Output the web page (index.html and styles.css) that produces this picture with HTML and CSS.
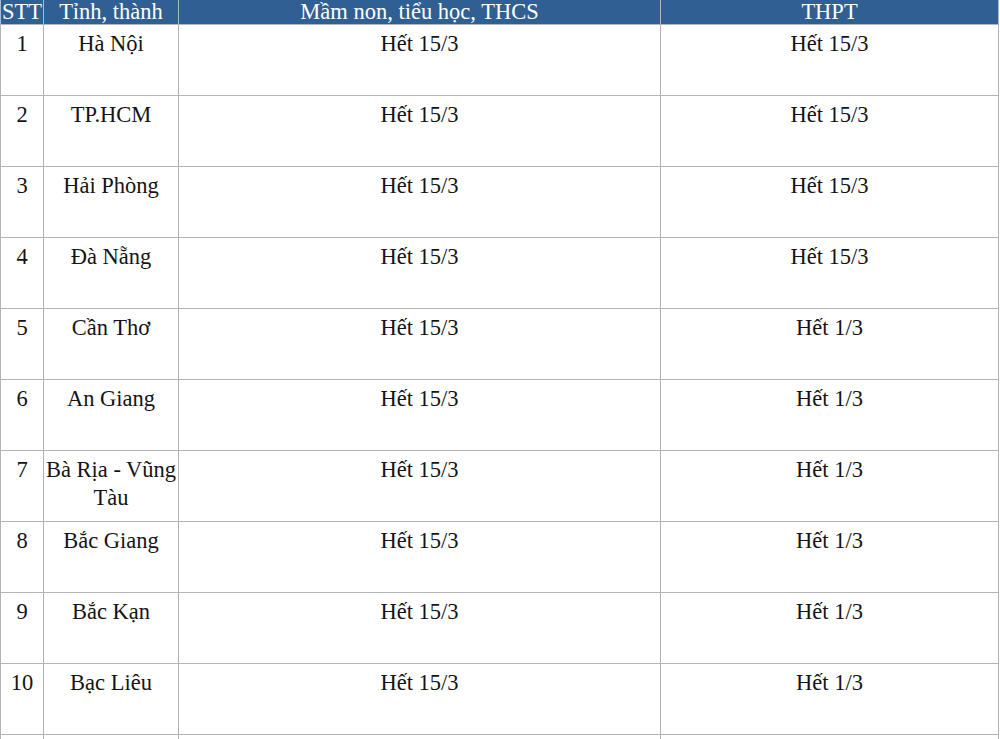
FILE: index.html
```html
<!DOCTYPE html>
<html lang="vi">
<head>
<meta charset="utf-8">
<title>Lịch nghỉ học</title>
<link rel="stylesheet" href="styles.css">
</head>
<body>
<table class="schedule">
  <colgroup>
    <col class="c-stt">
    <col class="c-prov">
    <col class="c-mn">
    <col class="c-thpt">
  </colgroup>
  <thead>
    <tr><th>STT</th><th>Tỉnh, thành</th><th>Mầm non, tiểu học, THCS</th><th>THPT</th></tr>
  </thead>
  <tbody>
    <tr><td>1</td><td>Hà Nội</td><td>Hết 15/3</td><td>Hết 15/3</td></tr>
    <tr><td>2</td><td>TP.HCM</td><td>Hết 15/3</td><td>Hết 15/3</td></tr>
    <tr><td>3</td><td>Hải Phòng</td><td>Hết 15/3</td><td>Hết 15/3</td></tr>
    <tr><td>4</td><td>Đà Nẵng</td><td>Hết 15/3</td><td>Hết 15/3</td></tr>
    <tr><td>5</td><td>Cần Thơ</td><td>Hết 15/3</td><td>Hết 1/3</td></tr>
    <tr><td>6</td><td>An Giang</td><td>Hết 15/3</td><td>Hết 1/3</td></tr>
    <tr><td>7</td><td>Bà Rịa - Vũng Tàu</td><td>Hết 15/3</td><td>Hết 1/3</td></tr>
    <tr><td>8</td><td>Bắc Giang</td><td>Hết 15/3</td><td>Hết 1/3</td></tr>
    <tr><td>9</td><td>Bắc Kạn</td><td>Hết 15/3</td><td>Hết 1/3</td></tr>
    <tr><td>10</td><td>Bạc Liêu</td><td>Hết 15/3</td><td>Hết 1/3</td></tr>
    <tr><td></td><td></td><td></td><td></td></tr>
  </tbody>
</table>
</body>
</html>
```
FILE: styles.css
```css
html, body {
  margin: 0;
  padding: 0;
  background: #ffffff;
  overflow: hidden;
}
.schedule {
  border-collapse: collapse;
  table-layout: fixed;
  width: 998px;
  font-family: "Liberation Serif", "Times New Roman", serif;
  font-size: 22.5px;
  color: #141414;
}
.c-stt { width: 43px; }
.c-prov { width: 135px; }
.c-mn { width: 482px; }
.c-thpt { width: 338px; }
.schedule th {
  font-family: "Liberation Serif", "Times New Roman", serif;
  background: #2f5f93;
  color: #ffffff;
  font-weight: normal;
  height: 24px;
  line-height: 24px;
  padding: 0;
  text-align: center;
  vertical-align: top;
  border-left: 1px solid #a9b9cc;
  border-right: 1px solid #a9b9cc;
  white-space: nowrap;
  overflow: hidden;
}
.schedule td {
  font-family: "Liberation Serif", "Times New Roman", serif;
  height: 63px;
  padding: 5px 1px 2px 1px;
  line-height: 28px;
  text-align: center;
  vertical-align: top;
  border: 1px solid #b3b3b3;
}
```
